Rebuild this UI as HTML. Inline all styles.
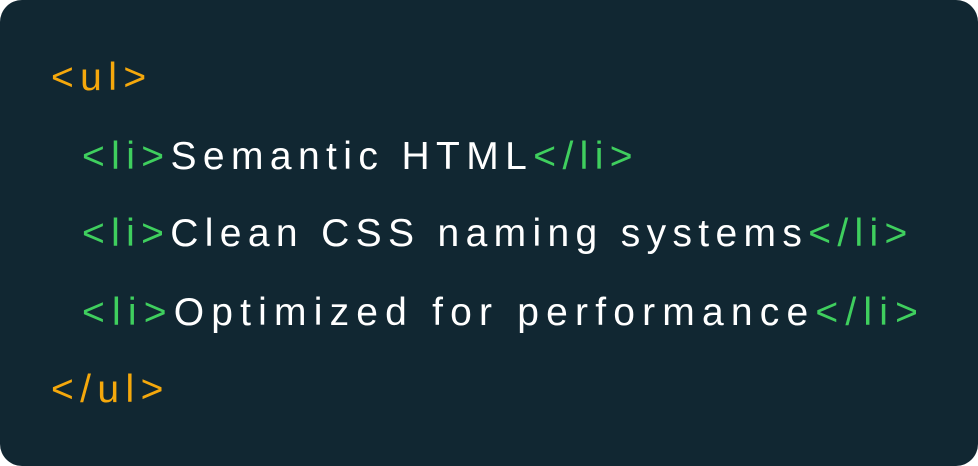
<!DOCTYPE html>
<html><head><style>
html,body{margin:0;padding:0;background:#fff;}
.box{position:absolute;left:0;top:0;width:978px;height:466px;background:#112732;border-radius:22px;overflow:hidden;}
.l{position:absolute;white-space:pre;font-family:"Liberation Sans",sans-serif;font-size:39px;letter-spacing:6.4px;line-height:40px;color:#fff;}
.o{color:#f5a80c}.g{color:#3fcf5e}
</style></head><body>
<div class="box">
<div class="l o" style="left:51px;top:58px">&lt;ul&gt;</div>
<div class="l" style="left:82px;top:137px"><span class="g">&lt;li&gt;</span>Semantic HTML<span class="g">&lt;/li&gt;</span></div>
<div class="l" style="left:82px;top:214px;letter-spacing:6.35px"><span class="g">&lt;li&gt;</span>Clean CSS naming systems<span class="g">&lt;/li&gt;</span></div>
<div class="l" style="left:82px;top:293px;letter-spacing:7.2px"><span class="g">&lt;li&gt;</span>Optimized for performance<span class="g">&lt;/li&gt;</span></div>
<div class="l o" style="left:51px;top:370px">&lt;/ul&gt;</div>
</div>
</body></html>
